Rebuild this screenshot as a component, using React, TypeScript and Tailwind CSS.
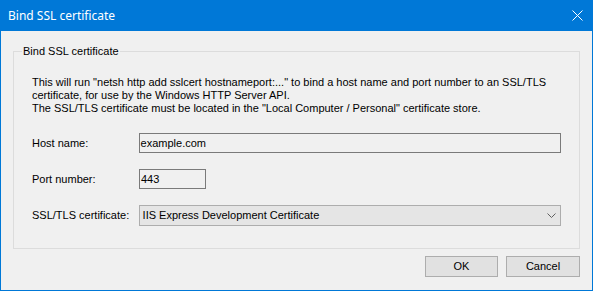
export default function App() {
  return (
    <div className="w-[593px] h-[291px] flex flex-col bg-[#f0f0f0] font-['Liberation_Sans',Arial,sans-serif] text-[11px] text-black">
      {/* Title bar */}
      <div className="h-[31px] shrink-0 bg-[#0078d7] flex items-center justify-between pl-[8px] pr-[10px]">
        <span className="text-white text-[12px] font-['Noto_Sans',sans-serif] leading-none">Bind SSL certificate</span>
        <svg width="11" height="11" viewBox="0 0 11 11">
          <path d="M0.5 0.5 L10.5 10.5 M10.5 0.5 L0.5 10.5" stroke="white" strokeWidth="1" />
        </svg>
      </div>

      <div className="flex-1 flex flex-col border-x border-b border-[#0078d7] px-[12px] pt-[14px]">
        <fieldset className="border border-[#dcdcdc] px-[18px] pb-[22px] pt-[18px] m-0 min-w-0">
          <legend className="-ml-[10px] px-[1px] leading-[13px]">Bind SSL certificate</legend>
          <div className="leading-[13px]">
            <p>This will run "netsh http add sslcert hostnameport:..." to bind a host name and port number to an SSL/TLS</p>
            <p>certificate, for use by the Windows HTTP Server API.</p>
            <p>The SSL/TLS certificate must be located in the "Local Computer / Personal" certificate store.</p>
          </div>

          <div className="mt-[18px] flex flex-col gap-[16px]">
            <div className="flex items-center">
              <span className="w-[107px]">Host name:</span>
              <div className="w-[424px] h-[20px] border border-[#7a7a7a] bg-[#f0f0f0] flex items-center pl-[1px]">example.com</div>
            </div>
            <div className="flex items-center">
              <span className="w-[107px]">Port number:</span>
              <div className="w-[67px] h-[20px] border border-[#7a7a7a] bg-[#f0f0f0] flex items-center pl-[1px]">443</div>
            </div>
            <div className="flex items-center">
              <span className="w-[107px]">SSL/TLS certificate:</span>
              <div className="w-[424px] h-[21px] border border-[#adadad] bg-[#e5e5e5] flex items-center justify-between pl-[3px] pr-[4px]">
                <span>IIS Express Development Certificate</span>
                <svg width="9" height="5" viewBox="0 0 9 5">
                  <path d="M0.5 0.5 L4.5 4.5 L8.5 0.5" stroke="#606060" strokeWidth="1" fill="none" />
                </svg>
              </div>
            </div>
          </div>
        </fieldset>

        <div className="mt-[7px] flex justify-end gap-[8px]">
          <button className="w-[73px] h-[21px] border border-[#adadad] bg-[#e1e1e1] leading-none">OK</button>
          <button className="w-[74px] h-[21px] border border-[#adadad] bg-[#e1e1e1] leading-none">Cancel</button>
        </div>
      </div>
    </div>
  );
}
